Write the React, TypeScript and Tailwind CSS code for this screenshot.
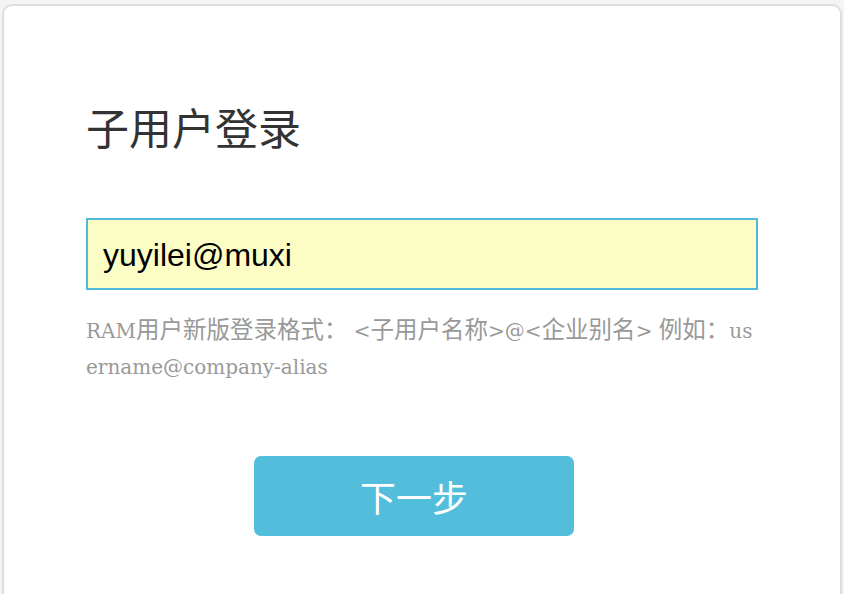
import React, { useState } from 'react';

export default function App() {
  const [name, setName] = useState('yuyilei@muxi');

  return (
    <div className="h-[594px] w-[844px] overflow-hidden bg-[#f4f4f4] px-[2px] pt-[4px]">
      <div className="h-[600px] rounded-[10px] border-2 border-[#dedede] bg-white px-[82px] pt-[92px]">
        {/* Title */}
        <h1 className="font-['Noto_Sans_CJK_SC',sans-serif] text-[43px] leading-[56px] text-[#333]">子用户登录</h1>

        {/* Account input */}
        <input
          value={name}
          onChange={(e) => setName(e.target.value)}
          className="mt-[64px] h-[72px] w-[672px] border-2 border-[#4db8d8] bg-[#fcfdc5] pl-[15px] pt-[3px] font-['Liberation_Sans',Arial,sans-serif] text-[32px] text-black outline-none"
        />

        {/* Format hint */}
        <p className="mt-[20px] w-[672px] break-all font-['DejaVu_Serif','Noto_Sans_CJK_SC',serif] text-[20px] leading-[36px] text-[#999]">
          RAM<span className="font-['Noto_Sans_CJK_SC',sans-serif] text-[23.5px]">用户新版登录格式：</span> &lt;
          <span className="font-['Noto_Sans_CJK_SC',sans-serif] text-[23.5px]">子用户名称</span>&gt;@&lt;
          <span className="font-['Noto_Sans_CJK_SC',sans-serif] text-[23.5px]">企业别名</span>&gt;{' '}
          <span className="font-['Noto_Sans_CJK_SC',sans-serif] text-[23.5px]">例如：</span>username@company-alias
        </p>

        {/* Next step */}
        <button className="mt-[71px] ml-[168px] h-[80px] w-[320px] rounded-[7px] bg-[#52bedb] font-['Noto_Sans_CJK_SC',sans-serif] text-[36px] text-white">
          下一步
        </button>
      </div>
    </div>
  );
}
